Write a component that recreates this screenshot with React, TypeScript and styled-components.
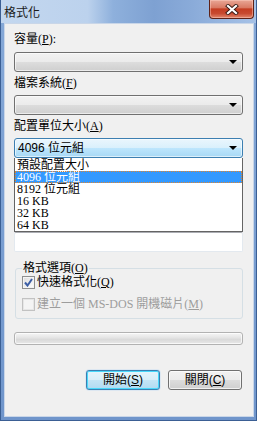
import styled, { createGlobalStyle } from "styled-components";

const GlobalStyle = createGlobalStyle`
  html, body {
    margin: 0;
    padding: 0;
    background: #ffffff;
  }
  body {
    font-family: "Liberation Serif", "Noto Sans CJK TC", serif;
    font-size: 12px;
    color: #000;
  }
`;

const Window = styled.div`
  width: 257px;
  height: 421px;
  box-sizing: border-box;
  display: flex;
  flex-direction: column;
  background: linear-gradient(to bottom, #86a9d8 0%, #6f95cb 100%);
  border: 1px solid #3b5f94;
  border-top: none;
`;

const TitleBar = styled.div`
  height: 23px;
  display: flex;
  align-items: flex-start;
  justify-content: space-between;
  background: linear-gradient(
    to right,
    #c3d7ef 0%,
    #bcd2ed 34%,
    #8eb0dc 44%,
    #7ea1d2 60%,
    #8aabd9 75%,
    #a6c2e7 100%
  );
`;

const Title = styled.div`
  padding: 5px 0 0 3px;
  font-family: "Noto Sans CJK TC", sans-serif;
  font-size: 12px;
  line-height: 13px;
  color: #1b1b1b;
`;

const CloseButton = styled.div`
  width: 45px;
  height: 19px;
  margin-right: 2px;
  box-sizing: border-box;
  border: 1px solid #5e2218;
  border-top: none;
  border-radius: 0 0 4px 4px;
  background: linear-gradient(
    to bottom,
    #e9a796 0%,
    #d97a64 42%,
    #c43d22 50%,
    #c84a30 75%,
    #e2876c 100%
  );
  box-shadow: inset 0 0 0 1px rgba(255, 210, 200, 0.45);
  display: flex;
  align-items: center;
  justify-content: center;
`;

const Client = styled.div`
  flex: 1;
  margin: 0 2px 3px 3px;
  background: #f0f0f0;
  border: 1px solid #c9d6e8;
  box-sizing: border-box;
  padding: 8px 10px 0 9px;
  display: flex;
  flex-direction: column;
`;

const Label = styled.div<{ $top: number }>`
  margin-top: ${(p) => p.$top}px;
  height: 14px;
  line-height: 14px;
  white-space: nowrap;
`;

const Key = styled.u`
  text-underline-offset: 1px;
`;

const ComboWrap = styled.div<{ $top: number }>`
  position: relative;
  margin-top: ${(p) => p.$top}px;
`;

const Combo = styled.div<{ $focused?: boolean }>`
  height: 20px;
  box-sizing: border-box;
  border: 1px solid ${(p) => (p.$focused ? "#3c7fb1" : "#707070")};
  border-radius: 3px;
  background: ${(p) =>
    p.$focused
      ? "linear-gradient(to bottom, #eaf6fd 0%, #d9f0fc 50%, #bee6fd 50%, #a7d9f5 100%)"
      : "linear-gradient(to bottom, #f2f2f2 0%, #ebebeb 50%, #dddddd 50%, #cfcfcf 100%)"};
  box-shadow: inset 0 0 0 1px rgba(255, 255, 255, 0.6);
  display: flex;
  align-items: center;
  padding: 0 3px 0 3px;
  font-family: "Liberation Sans", "Noto Sans CJK TC", sans-serif;
  font-size: 12px;
`;

const ComboText = styled.div`
  flex: 1;
  line-height: 14px;
`;

const Arrow = styled.div`
  width: 0;
  height: 0;
  margin-right: 2px;
  border-left: 4px solid transparent;
  border-right: 4px solid transparent;
  border-top: 4px solid #000;
`;

const DropList = styled.div`
  position: absolute;
  top: 100%;
  left: 0;
  right: 0;
  z-index: 5;
  background: #ffffff;
  border: 1px solid #646464;
  border-top: none;
  padding-top: 1px;
`;

const Option = styled.div<{ $selected?: boolean }>`
  height: 12px;
  line-height: 12px;
  padding-left: 2px;
  box-sizing: border-box;
  white-space: nowrap;
  font-family: "Liberation Serif", "Noto Sans CJK TC", serif;
  font-size: 12px;
  color: ${(p) => (p.$selected ? "#ffffff" : "#000000")};
  background: ${(p) => (p.$selected ? "#3399ff" : "transparent")};
  outline: ${(p) => (p.$selected ? "1px dotted #e0852e" : "none")};
  outline-offset: -1px;
`;

const TextBox = styled.div`
  margin-top: 74px;
  height: 20px;
  box-sizing: border-box;
  background: #ffffff;
  border: 1px solid #e3e9ef;
  border-top-color: #abadb3;
  border-radius: 2px;
`;

const Group = styled.fieldset`
  margin: 10px 0 0 1px;
  padding: 1px 6px 7px 6px;
  border: 1px solid #d5dfe5;
  border-radius: 3px;
  min-width: 0;
`;

const Legend = styled.legend`
  padding: 0 1px;
  line-height: 12px;
  font-size: 12px;
`;

const CheckRow = styled.div<{ $disabled?: boolean; $top: number }>`
  margin-top: ${(p) => p.$top}px;
  display: flex;
  align-items: center;
  gap: 2px;
  height: 14px;
  line-height: 14px;
  white-space: nowrap;
  color: ${(p) => (p.$disabled ? "#9d9d9d" : "#000")};
`;

const Box = styled.div<{ $disabled?: boolean }>`
  width: 13px;
  height: 13px;
  box-sizing: border-box;
  border: 1px solid ${(p) => (p.$disabled ? "#c2c2c2" : "#8e8f8f")};
  background: ${(p) =>
    p.$disabled
      ? "#f4f4f4"
      : "linear-gradient(135deg, #dcdcdc 0%, #ffffff 100%)"};
  box-shadow: inset 0 0 0 1px ${(p) => (p.$disabled ? "#e6e6e6" : "#f4f4f4")};
  display: flex;
  align-items: center;
  justify-content: center;
`;

const Progress = styled.div`
  margin-top: 13px;
  height: 13px;
  box-sizing: border-box;
  border: 1px solid #b2b2b2;
  border-radius: 3px;
  background: linear-gradient(to bottom, #f6f6f6 0%, #e6e6e6 40%, #dadada 60%, #e9e9e9 100%);
  box-shadow: inset 0 0 0 1px rgba(255, 255, 255, 0.7);
`;

const ButtonRow = styled.div`
  margin-top: 25px;
  display: flex;
  justify-content: flex-end;
  gap: 8px;
  padding-right: 1px;
`;

const Button = styled.div<{ $default?: boolean }>`
  width: 74px;
  height: 20px;
  box-sizing: border-box;
  border: 1px solid ${(p) => (p.$default ? "#3c7fb1" : "#707070")};
  border-radius: 3px;
  background: ${(p) =>
    p.$default
      ? "linear-gradient(to bottom, #e5f4fc 0%, #d8eef9 50%, #c4e5f6 50%, #b1dbf2 100%)"
      : "linear-gradient(to bottom, #f2f2f2 0%, #ebebeb 50%, #dddddd 50%, #cfcfcf 100%)"};
  box-shadow: ${(p) =>
    p.$default
      ? "inset 0 0 0 1px #48d8fb, 0 0 1px #3399ff"
      : "inset 0 0 0 1px rgba(255,255,255,0.7)"};
  display: flex;
  align-items: center;
  justify-content: center;
  font-family: "Liberation Sans", "Noto Sans CJK TC", sans-serif;
  font-size: 12px;
  line-height: 14px;
`;

const CloseIcon = () => (
  <svg width="14" height="11" viewBox="0 0 14 11">
    <path d="M3 2 L11 9 M11 2 L3 9" stroke="#3a1a14" strokeWidth="4" strokeLinecap="square" />
    <path d="M3 2 L11 9 M11 2 L3 9" stroke="#ffffff" strokeWidth="2.2" strokeLinecap="square" />
  </svg>
);

const CheckMark = () => (
  <svg width="9" height="9" viewBox="0 0 9 9">
    <path d="M1 4.5 L3.5 7.5 L8 1" fill="none" stroke="#3c5ea5" strokeWidth="2" />
  </svg>
);

const options = ["預設配置大小", "4096 位元組", "8192 位元組", "16 KB", "32 KB", "64 KB"];

export default function App() {
  return (
    <>
      <GlobalStyle />
      <Window>
        <TitleBar>
          <Title>格式化</Title>
          <CloseButton>
            <CloseIcon />
          </CloseButton>
        </TitleBar>
        <Client>
          <Label $top={0}>
            容量(<Key>P</Key>):
          </Label>
          <ComboWrap $top={6}>
            <Combo>
              <ComboText />
              <Arrow />
            </Combo>
          </ComboWrap>
          <Label $top={4}>
            檔案系統(<Key>F</Key>)
          </Label>
          <ComboWrap $top={5}>
            <Combo>
              <ComboText />
              <Arrow />
            </Combo>
          </ComboWrap>
          <Label $top={4}>
            配置單位大小(<Key>A</Key>)
          </Label>
          <ComboWrap $top={5}>
            <Combo $focused>
              <ComboText>4096 位元組</ComboText>
              <Arrow />
            </Combo>
            <DropList>
              {options.map((o, i) => (
                <Option key={o} $selected={i === 1}>
                  {o}
                </Option>
              ))}
            </DropList>
          </ComboWrap>
          <TextBox />
          <Group>
            <Legend>
              格式選項(<Key>O</Key>)
            </Legend>
            <CheckRow $top={0}>
              <Box>
                <CheckMark />
              </Box>
              <span>
                快速格式化(<Key>Q</Key>)
              </span>
            </CheckRow>
            <CheckRow $top={8} $disabled>
              <Box $disabled />
              <span>
                建立一個 MS-DOS 開機磁片(<Key>M</Key>)
              </span>
            </CheckRow>
          </Group>
          <Progress />
          <ButtonRow>
            <Button $default>
              開始(<Key>S</Key>)
            </Button>
            <Button>
              關閉(<Key>C</Key>)
            </Button>
          </ButtonRow>
        </Client>
      </Window>
    </>
  );
}
